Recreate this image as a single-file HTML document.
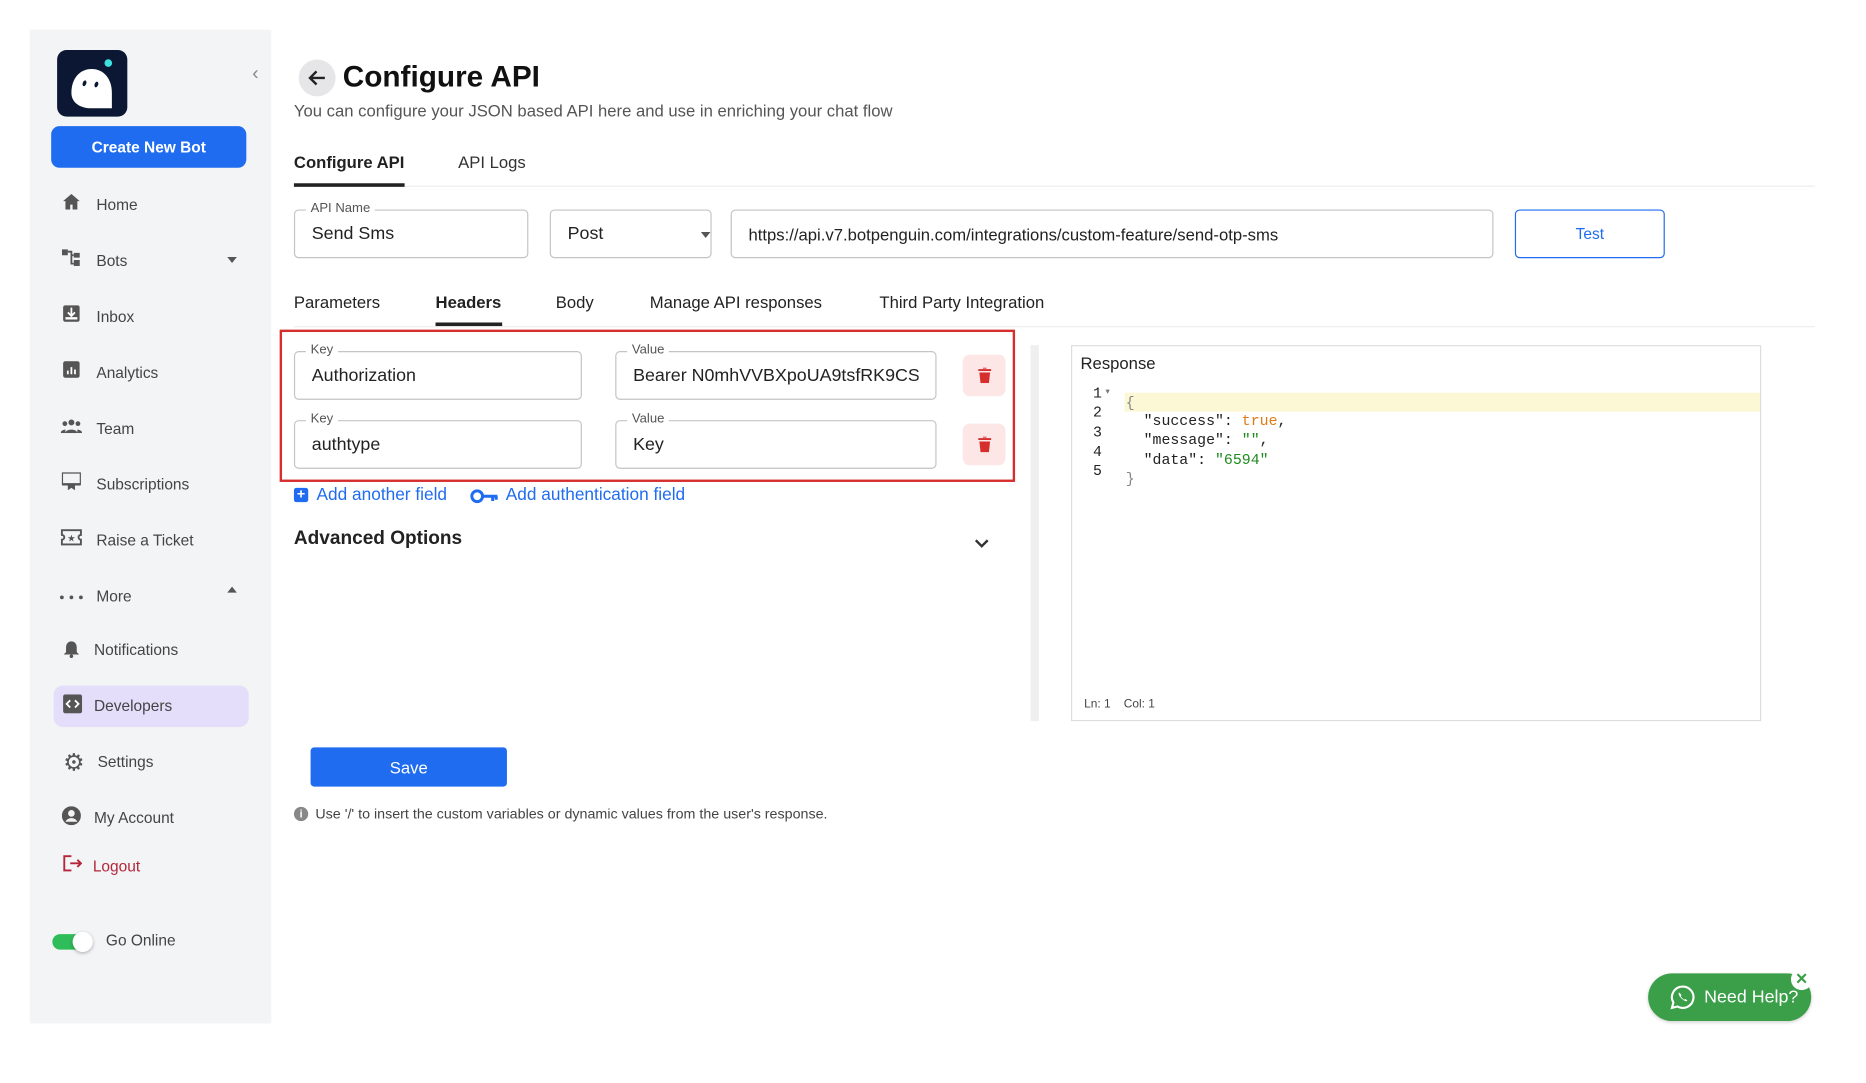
<!DOCTYPE html>
<html><head><meta charset="utf-8"><style>
*{box-sizing:border-box;margin:0;padding:0}
html,body{width:1866px;height:1080px;overflow:hidden;background:#fff;font-family:"Liberation Sans",sans-serif;color:#222}
#w{position:absolute;left:0;top:0;width:1570px;height:910px;transform:scale(1.19);transform-origin:0 0}
.a{position:absolute}
.side{left:25px;top:25px;width:203px;height:835px;background:#f3f4f6}
.nav{position:absolute;font-size:13px;color:#444;transform:translateY(-50%)}
.ic{position:absolute;transform:translate(-50%,-50%)}
.fld{position:absolute;border:1px solid #c4c4c4;border-radius:4px;font-size:15px;color:#222;padding-left:14px;display:flex;align-items:center}
.lbl{position:absolute;top:-8px;left:9px;background:#fff;padding:0 4px;font-size:11px;color:#555}
.clip{overflow:hidden;white-space:nowrap;width:240px}
.t{position:absolute;font-size:14px;transform:translateY(-50%);white-space:nowrap}
.del{position:absolute;width:36px;height:35px;background:#fde6e6;border-radius:6px;display:flex;align-items:center;justify-content:center}
.code{position:absolute;font-family:"Liberation Mono",monospace;font-size:12.5px;white-space:pre;color:#222}
</style></head><body><div id="w">
<div class="a side"></div>
<div class="a" style="left:48px;top:42px;width:59px;height:56px;background:#0b1733;border-radius:8px">
<svg width="59" height="56" viewBox="0 0 59 56"><path d="M12 36c0-12 7-20 17-20s17 8 17 20v13H29c-10 0-17-5-17-13z" fill="#fff"/><ellipse cx="23" cy="28" rx="1.5" ry="2.5" fill="#0b1733" transform="rotate(20 23 28)"/><ellipse cx="33" cy="29" rx="1.5" ry="2.5" fill="#0b1733" transform="rotate(20 33 29)"/><circle cx="43" cy="11" r="3.2" fill="#3fe0e0"/></svg></div>
<div class="a" style="left:212px;top:54px;font-size:16px;color:#888">&#8249;</div>
<div class="a" style="left:43px;top:106px;width:164px;height:35px;background:#1f6cf0;border-radius:7px;color:#fff;font-size:13px;font-weight:bold;display:flex;align-items:center;justify-content:center">Create New Bot</div>
<div class="ic" style="left:60px;top:172px"><svg width="14" height="13"><path d="M7 0L0 6h2v7h4V9h2v4h4V6h2z" fill="#555"/></svg></div><div class="nav" style="left:81px;top:172px">Home</div>
<div class="ic" style="left:60px;top:219px"><svg width="16" height="14"><rect x="0" y="0" width="5" height="5" fill="#555"/><rect x="10" y="3" width="5" height="4" fill="#555"/><rect x="10" y="9" width="5" height="5" fill="#555"/><path d="M5 2h3v10h2M8 5h2" stroke="#555" fill="none" stroke-width="1.5"/></svg></div><div class="nav" style="left:81px;top:219px">Bots</div>
<div class="a" style="left:191px;top:216px;border:4px solid transparent;border-top:5px solid #555"></div>
<div class="ic" style="left:60px;top:266px"><svg width="14" height="14"><rect x="0" y="0" width="14" height="14" rx="2" fill="#555"/><path d="M7 2v6M4 6l3 3 3-3" stroke="#fff" fill="none" stroke-width="1.5"/><rect x="2" y="10" width="10" height="2" fill="#fff"/></svg></div><div class="nav" style="left:81px;top:266px">Inbox</div>
<div class="ic" style="left:60px;top:313px"><svg width="14" height="14"><rect width="14" height="14" rx="2" fill="#555"/><path d="M4 11V8M7 11V5M10 11V7" stroke="#fff" stroke-width="1.5"/></svg></div><div class="nav" style="left:81px;top:313px">Analytics</div>
<div class="ic" style="left:60px;top:360px"><svg width="18" height="12"><circle cx="9" cy="3" r="2.5" fill="#555"/><circle cx="3.5" cy="4" r="2" fill="#555"/><circle cx="14.5" cy="4" r="2" fill="#555"/><path d="M4 12c0-4 10-4 10 0zM0 12c0-3 4-3 4-3v3zM18 12c0-3-4-3-4-3v3z" fill="#555"/></svg></div><div class="nav" style="left:81px;top:360px">Team</div>
<div class="ic" style="left:60px;top:407px"><svg width="16" height="15"><rect x="0" y="0" width="16" height="10" rx="1" fill="none" stroke="#555" stroke-width="2"/><path d="M5 10v5l3-2 3 2v-5" fill="#555"/></svg></div><div class="nav" style="left:81px;top:407px">Subscriptions</div>
<div class="ic" style="left:60px;top:454px"><svg width="18" height="14"><path d="M1 1h16v4a2 2 0 000 4v4H1V9a2 2 0 000-4z" fill="none" stroke="#555" stroke-width="1.6"/><text x="9" y="10.5" font-size="8" text-anchor="middle" fill="#555">★</text></svg></div><div class="nav" style="left:81px;top:454px">Raise a Ticket</div>
<div class="ic" style="left:60px;top:500px"><svg width="20" height="4"><circle cx="2" cy="2" r="1.6" fill="#555"/><circle cx="10" cy="2" r="1.6" fill="#555"/><circle cx="18" cy="2" r="1.6" fill="#555"/></svg></div><div class="nav" style="left:81px;top:501px">More</div>
<div class="a" style="left:191px;top:493px;border:4px solid transparent;border-bottom:5px solid #555;border-top:0"></div>
<div class="ic" style="left:60px;top:548px"><svg width="13" height="15"><path d="M6.5 1c3 0 4.5 2.5 4.5 5v4l2 2H0l2-2V6c0-2.5 1.5-5 4.5-5z" fill="#555"/><circle cx="6.5" cy="13.5" r="1.5" fill="#555"/></svg></div><div class="nav" style="left:79px;top:546px">Notifications</div>
<div class="a" style="left:45px;top:576px;width:164px;height:35px;background:#e4defa;border-radius:8px"></div>
<div class="ic" style="left:61px;top:594px"><svg width="16" height="16"><rect width="16" height="16" rx="2" fill="#555"/><path d="M6 5L3 8l3 3M10 5l3 3-3 3" stroke="#fff" fill="none" stroke-width="1.5"/></svg></div><div class="nav" style="left:79px;top:593px">Developers</div>
<div class="ic" style="left:62px;top:641px;font-size:20px;color:#555">&#9881;</div><div class="nav" style="left:82px;top:640px">Settings</div>
<div class="ic" style="left:60px;top:688px"><svg width="16" height="16"><circle cx="8" cy="8" r="8" fill="#555"/><circle cx="8" cy="6" r="2.8" fill="#f3f4f6"/><path d="M3 13c2-4 8-4 10 0" fill="#f3f4f6"/></svg></div><div class="nav" style="left:79px;top:687px">My Account</div>
<div class="ic" style="left:61px;top:728px"><svg width="16" height="14"><path d="M7 1H1v12h6M6 7h9M12 4l3 3-3 3" stroke="#b5253a" fill="none" stroke-width="1.6"/></svg></div><div class="nav" style="left:78px;top:728px;color:#b5253a">Logout</div>
<div class="a" style="left:44px;top:785px;width:30px;height:13px;background:#2ebd59;border-radius:7px"></div>
<div class="a" style="left:61px;top:783px;width:17px;height:17px;background:#fff;border-radius:50%;box-shadow:0 1px 3px rgba(0,0,0,.3)"></div>
<div class="nav" style="left:89px;top:790px">Go Online</div>
<div class="a" style="left:251px;top:50px;width:31px;height:31px;border-radius:50%;background:#e6e6e8"></div>
<div class="a" style="left:258px;top:57px"><svg width="17" height="17"><path d="M15 8.5H3M8 3L2.5 8.5 8 14" stroke="#222" stroke-width="2" fill="none"/></svg></div>
<div class="t" style="left:288px;top:65px;font-size:25px;font-weight:bold;color:#111">Configure API</div>
<div class="t" style="left:247px;top:93px;font-size:14px;color:#555">You can configure your JSON based API here and use in enriching your chat flow</div>
<div class="t" style="left:247px;top:136px;font-weight:bold;color:#222">Configure API</div>
<div class="t" style="left:385px;top:136px;color:#333">API Logs</div>
<div class="a" style="left:247px;top:156px;width:1278px;height:1px;background:#eee"></div>
<div class="a" style="left:247px;top:154px;width:93px;height:3px;background:#222"></div>
<div class="fld" style="left:247px;top:176px;width:197px;height:41px">Send Sms<span class="lbl">API Name</span></div>
<div class="fld" style="left:462px;top:176px;width:136px;height:41px">Post</div>
<div class="a" style="left:589px;top:195px;border:4px solid transparent;border-top:5px solid #555"></div>
<div class="fld" style="left:614px;top:176px;width:641px;height:41px;font-size:14px">https://api.v7.botpenguin.com/integrations/custom-feature/send-otp-sms</div>
<div class="a" style="left:1273px;top:176px;width:126px;height:41px;border:1.5px solid #1f6cf0;border-radius:4px;color:#1f6cf0;font-size:13px;display:flex;align-items:center;justify-content:center">Test</div>
<div class="t" style="left:247px;top:254px">Parameters</div>
<div class="t" style="left:366px;top:254px;font-weight:bold">Headers</div>
<div class="t" style="left:467px;top:254px">Body</div>
<div class="t" style="left:546px;top:254px">Manage API responses</div>
<div class="t" style="left:739px;top:254px">Third Party Integration</div>
<div class="a" style="left:247px;top:274px;width:1278px;height:1px;background:#eee"></div>
<div class="a" style="left:366px;top:271px;width:56px;height:3px;background:#222"></div>
<div class="a" style="left:235px;top:277px;width:618px;height:128px;border:2px solid #d62d2d"></div>
<div class="fld" style="left:247px;top:295px;width:242px;height:41px">Authorization<span class="lbl">Key</span></div>
<div class="fld" style="left:517px;top:295px;width:270px;height:41px"><span class="clip">Bearer N0mhVVBXpoUA9tsfRK9CS</span><span class="lbl">Value</span></div>
<div class="del" style="left:809px;top:298px"><svg width="11" height="13"><path d="M0 2h11M4 0h3" stroke="#d62d2d" stroke-width="1.6"/><path d="M1 4h9l-1 9H2z" fill="#d62d2d"/></svg></div>
<div class="fld" style="left:247px;top:353px;width:242px;height:41px">authtype<span class="lbl">Key</span></div>
<div class="fld" style="left:517px;top:353px;width:270px;height:41px">Key<span class="lbl">Value</span></div>
<div class="del" style="left:809px;top:356px"><svg width="11" height="13"><path d="M0 2h11M4 0h3" stroke="#d62d2d" stroke-width="1.6"/><path d="M1 4h9l-1 9H2z" fill="#d62d2d"/></svg></div>
<div class="a" style="left:247px;top:410px;width:12px;height:12px;background:#1f6cf0;border-radius:2px;color:#fff;font-size:12px;line-height:11px;text-align:center;font-weight:bold">+</div>
<div class="t" style="left:266px;top:416px;color:#1f6cf0;font-size:14.5px">Add another field</div>
<div class="a" style="left:395px;top:410px"><svg width="24" height="12"><circle cx="6" cy="6" r="4.5" fill="none" stroke="#1f6cf0" stroke-width="2.5"/><path d="M10 6h13M19 6v4M22 6v3" stroke="#1f6cf0" stroke-width="2.5"/></svg></div>
<div class="t" style="left:425px;top:416px;color:#1f6cf0;font-size:14.5px">Add authentication field</div>
<div class="t" style="left:247px;top:453px;font-weight:bold;font-size:16px;color:#222">Advanced Options</div>
<div class="a" style="left:819px;top:448px"><svg width="12" height="8"><path d="M1 1l5 5 5-5" stroke="#333" stroke-width="2" fill="none"/></svg></div>
<div class="a" style="left:866px;top:290px;width:7px;height:316px;background:#efefef"></div>
<div class="a" style="left:900px;top:290px;width:580px;height:316px;border:1px solid #ddd"></div>
<div class="t" style="left:908px;top:305px;font-size:14px;color:#222">Response</div>
<div class="a" style="left:945px;top:330px;width:534px;height:16px;background:#fcf8d6"></div>
<div class="code" style="left:908px;top:323px;line-height:16.3px;text-align:right;width:18px">1
2
3
4
5</div>
<div class="a" style="left:929px;top:325px;font-size:7px;color:#777">▾</div>
<div class="code" style="left:946px;top:331px;line-height:16.3px;color:#888">{</div>
<div class="code" style="left:946px;top:346px;line-height:16.3px">  "success": <span style="color:#e07b14">true</span>,
  "message": <span style="color:#1e8a1e">""</span>,
  "data": <span style="color:#1e8a1e">"6594"</span>
<span style="color:#888">}</span></div>
<div class="t" style="left:911px;top:592px;font-size:10px;color:#444">Ln: 1&nbsp;&nbsp;&nbsp;&nbsp;Col: 1</div>
<div class="a" style="left:261px;top:628px;width:165px;height:33px;background:#1f6cf0;border-radius:3px;color:#fff;font-size:14px;display:flex;align-items:center;justify-content:center">Save</div>
<div class="a" style="left:247px;top:678px;width:12px;height:12px;border-radius:50%;background:#888;color:#fff;font-size:9px;text-align:center;line-height:12px;font-weight:bold">i</div>
<div class="t" style="left:265px;top:684px;font-size:12px;color:#444">Use '/' to insert the custom variables or dynamic values from the user's response.</div>
<div class="a" style="left:1385px;top:818px;width:137px;height:40px;background:#3a9f48;border-radius:20px;box-shadow:0 1px 3px rgba(0,0,0,.2)"></div>
<div class="a" style="left:1403px;top:827px"><svg width="22" height="22"><path d="M11 2a9 9 0 00-7.8 13.5L2 20l4.6-1.2A9 9 0 1011 2z" fill="none" stroke="#fff" stroke-width="1.8"/><path d="M8 7c-1 1 0 3 2 5s4 3 5 2l-1.5-1.5-1.5.5-2.5-2.5.5-1.5z" fill="#fff"/></svg></div>
<div class="t" style="left:1432px;top:838px;font-size:15px;color:#fff">Need Help?</div>
<div class="a" style="left:1505px;top:814px;width:18px;height:18px;border-radius:50%;background:#fff;color:#3a9f48;font-size:13px;font-weight:bold;text-align:center;line-height:18px">✕</div>
</div></body></html>
